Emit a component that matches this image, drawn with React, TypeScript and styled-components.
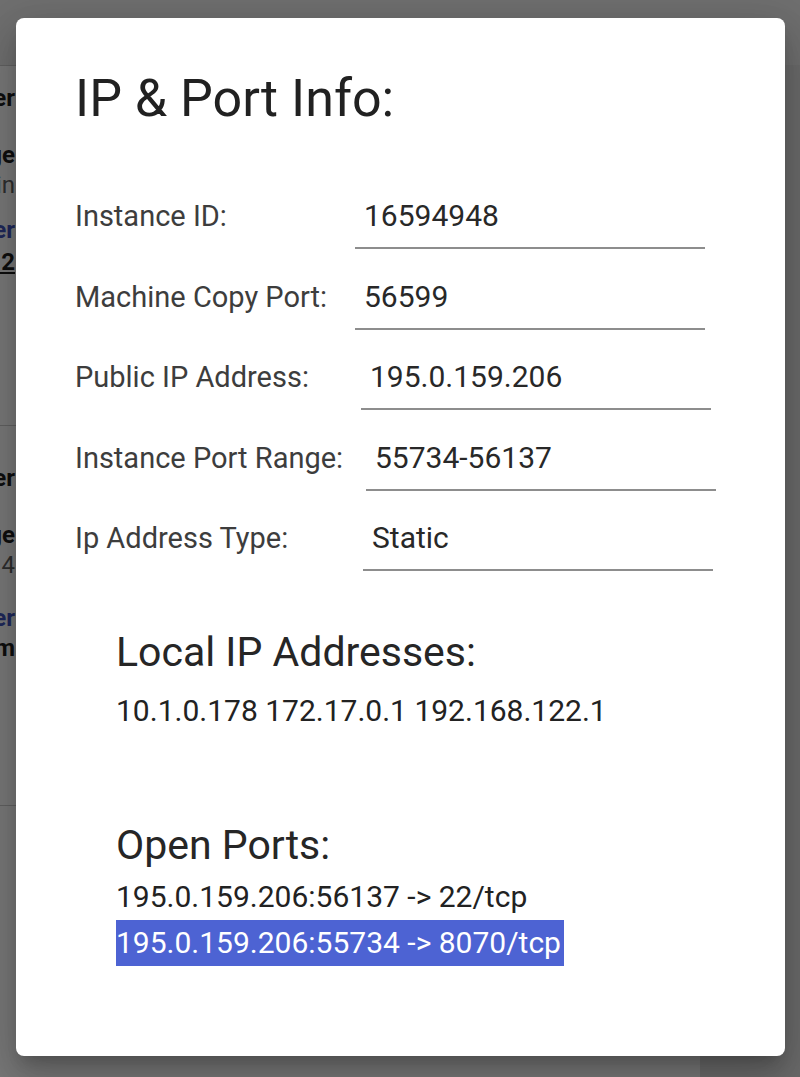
import React from 'react'
import styled, { createGlobalStyle } from 'styled-components'

const GlobalStyle = createGlobalStyle`
  html, body {
    margin: 0;
    padding: 0;
  }
  body {
    width: 800px;
    height: 1077px;
    overflow: hidden;
    background: #d6d6d6;
    font-family: Roboto, 'Noto Sans', 'Liberation Sans', sans-serif;
  }
`

// page behind the dialog, only a sliver of it shows at the left edge
const Page = styled.div`
  position: relative;
  width: 800px;
  height: 1077px;
  overflow: hidden;
  background: #d6d6d6;
`

const Header = styled.header`
  height: 65px;
  background: #dedede;
`

const Card = styled.section<{ $height: number }>`
  box-sizing: border-box;
  width: 700px;
  height: ${({ $height }) => $height}px;
  background: #f3f3f3;
  border-top: 1px solid #c2c2c2;
`

const Peek = styled.div`
  display: flex;
  flex-direction: column;
  width: 15px;
`

type Tone = 'strong' | 'muted' | 'link' | 'underline'

const toneColor: Record<Tone, string> = {
  strong: '#1c1c1c',
  muted: '#5c5c5c',
  link: '#3f51b5',
  underline: '#1c1c1c',
}

const PeekLine = styled.div<{ $top: number; $tone: Tone }>`
  display: flex;
  justify-content: flex-end;
  margin-top: ${({ $top }) => $top}px;
  white-space: nowrap;
  font-size: 24px;
  line-height: 28px;
  font-weight: ${({ $tone }) => ($tone === 'muted' ? 400 : 700)};
  color: ${({ $tone }) => toneColor[$tone]};
  text-decoration: ${({ $tone }) => ($tone === 'underline' ? 'underline' : 'none')};
`

const Backdrop = styled.div`
  position: absolute;
  inset: 0;
  background: rgba(0, 0, 0, 0.5);
`

const Dialog = styled.div`
  position: absolute;
  left: 16px;
  top: 18px;
  width: 769px;
  height: 1038px;
  box-sizing: border-box;
  padding: 51px 0 0 59px;
  display: flex;
  flex-direction: column;
  background: #fff;
  border-radius: 8px;
  box-shadow: 0 11px 15px -7px rgba(0, 0, 0, 0.2), 0 24px 38px 3px rgba(0, 0, 0, 0.14),
    0 9px 46px 8px rgba(0, 0, 0, 0.12);
`

const Title = styled.h2`
  margin: 0;
  font-size: 52px;
  line-height: 60px;
  font-weight: 400;
  color: #212121;
`

const Form = styled.div`
  display: grid;
  row-gap: 29.5px;
  margin-top: 69px;
`

const Row = styled.div`
  display: flex;
  align-items: baseline;
`

const Label = styled.label<{ $shift: number }>`
  flex: none;
  width: ${({ $shift }) => 280 + $shift}px;
  font-size: 29px;
  line-height: 36px;
  color: #3d3d3d;
`

const Field = styled.div`
  box-sizing: border-box;
  width: 350px;
  padding: 0 0 13px 9px;
  border-bottom: 2px solid #8d8d8d;
  font-size: 30px;
  line-height: 36px;
  color: #282828;
`

const Section = styled.div<{ $top: number }>`
  margin: ${({ $top }) => $top}px 0 0 41px;
`

const SectionTitle = styled.h3<{ $gap: number }>`
  margin: 0 0 ${({ $gap }) => $gap}px;
  font-size: 41px;
  line-height: 48px;
  font-weight: 400;
  color: #262626;
`

const Line = styled.div<{ $height: number }>`
  font-size: 30px;
  line-height: ${({ $height }) => $height}px;
  color: #222;
  white-space: nowrap;
`

const Selected = styled.span`
  display: inline-block;
  padding-right: 3px;
  background: #4d63d3;
  color: #fff;
`

const rows = [
  { label: 'Instance ID:', value: '16594948', shift: 0 },
  { label: 'Machine Copy Port:', value: '56599', shift: 0 },
  { label: 'Public IP Address:', value: '195.0.159.206', shift: 6 },
  { label: 'Instance Port Range:', value: '55734-56137', shift: 11 },
  { label: 'Ip Address Type:', value: 'Static', shift: 8 },
]

const cards: { height: number; lines: { text: string; top: number; tone: Tone }[] }[] = [
  {
    height: 360,
    lines: [
      { text: 'Server', top: 18, tone: 'strong' },
      { text: 'Storage', top: 29, tone: 'strong' },
      { text: '1 min', top: 2, tone: 'muted' },
      { text: 'Owner', top: 17, tone: 'link' },
      { text: '12', top: 4, tone: 'underline' },
    ],
  },
  {
    height: 380,
    lines: [
      { text: 'Server', top: 38, tone: 'strong' },
      { text: 'Storage', top: 29, tone: 'strong' },
      { text: '14', top: 2, tone: 'muted' },
      { text: 'Owner', top: 25, tone: 'link' },
      { text: 'Team', top: 2, tone: 'strong' },
    ],
  },
  { height: 272, lines: [] },
]

export default function App() {
  return (
    <>
      <GlobalStyle />
      <Page>
        <Header />
        {cards.map((card, i) => (
          <Card key={i} $height={card.height}>
            <Peek>
              {card.lines.map((line, j) => (
                <PeekLine key={j} $top={line.top} $tone={line.tone}>
                  {line.text}
                </PeekLine>
              ))}
            </Peek>
          </Card>
        ))}
        <Backdrop />
        <Dialog role="dialog">
          <Title>IP &amp; Port Info:</Title>
          <Form>
            {rows.map((row) => (
              <Row key={row.label}>
                <Label $shift={row.shift}>{row.label}</Label>
                <Field>{row.value}</Field>
              </Row>
            ))}
          </Form>
          <Section $top={57}>
            <SectionTitle $gap={13}>Local IP Addresses:</SectionTitle>
            <Line $height={44}>10.1.0.178 172.17.0.1 192.168.122.1</Line>
          </Section>
          <Section $top={88}>
            <SectionTitle $gap={5}>Open Ports:</SectionTitle>
            <Line $height={46}>195.0.159.206:56137 -&gt; 22/tcp</Line>
            <Line $height={46}>
              <Selected>195.0.159.206:55734 -&gt; 8070/tcp</Selected>
            </Line>
          </Section>
        </Dialog>
      </Page>
    </>
  )
}
